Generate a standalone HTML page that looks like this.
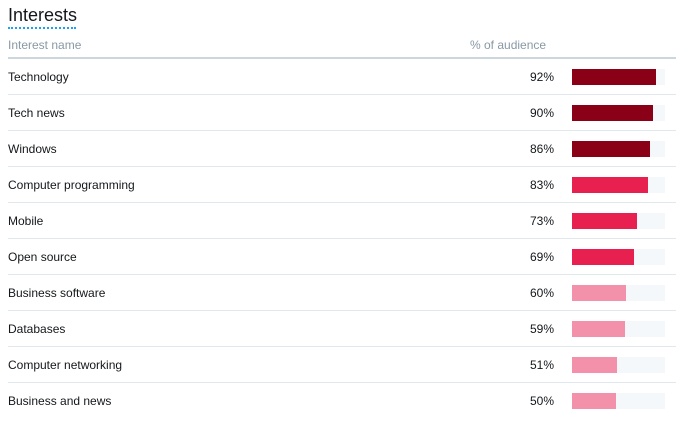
<!DOCTYPE html><html><head><style>
body{margin:0;background:#fff;font-family:"Liberation Sans",sans-serif;width:676px;height:423px;overflow:hidden;position:relative}
.t{position:absolute;left:8px;top:5px;font-size:18px;color:#14171a;padding-bottom:1px;border-bottom:2px dotted #1da1f2;line-height:21px;width:68px;white-space:nowrap}
.h{position:absolute;top:38px;font-size:12px;color:#8899a6}
.hl{position:absolute;left:8px;right:0;top:57px;height:2px;background:#ccd6dd}
.r{position:absolute;left:8px;right:0;height:36px;border-bottom:1px solid #e1e8ed;font-size:12px;color:#14171a}
.n{position:absolute;left:0;top:12px}
.p{position:absolute;right:122px;top:12px}
.tr{position:absolute;left:564px;top:11px;width:93px;height:16px;background:#f5f8fa}
.b{height:16px}
</style></head><body>
<div class="t">Interests</div>
<div class="h" style="left:8px">Interest name</div>
<div class="h" style="left:470px">% of audience</div>
<div class="hl"></div>
<div class="r" style="top:58px"><span class="n">Technology</span><span class="p">92%</span><div class="tr"><div class="b" style="width:84px;background:#8a0016"></div></div></div>
<div class="r" style="top:94px"><span class="n">Tech news</span><span class="p">90%</span><div class="tr"><div class="b" style="width:81px;background:#8a0016"></div></div></div>
<div class="r" style="top:130px"><span class="n">Windows</span><span class="p">86%</span><div class="tr"><div class="b" style="width:78px;background:#8a0016"></div></div></div>
<div class="r" style="top:166px"><span class="n">Computer programming</span><span class="p">83%</span><div class="tr"><div class="b" style="width:76px;background:#e8204f"></div></div></div>
<div class="r" style="top:202px"><span class="n">Mobile</span><span class="p">73%</span><div class="tr"><div class="b" style="width:65px;background:#e8204f"></div></div></div>
<div class="r" style="top:238px"><span class="n">Open source</span><span class="p">69%</span><div class="tr"><div class="b" style="width:62px;background:#e8204f"></div></div></div>
<div class="r" style="top:274px"><span class="n">Business software</span><span class="p">60%</span><div class="tr"><div class="b" style="width:54px;background:#f491aa"></div></div></div>
<div class="r" style="top:310px"><span class="n">Databases</span><span class="p">59%</span><div class="tr"><div class="b" style="width:53px;background:#f491aa"></div></div></div>
<div class="r" style="top:346px"><span class="n">Computer networking</span><span class="p">51%</span><div class="tr"><div class="b" style="width:45px;background:#f491aa"></div></div></div>
<div class="r" style="top:382px;border-bottom:none"><span class="n">Business and news</span><span class="p">50%</span><div class="tr"><div class="b" style="width:44px;background:#f491aa"></div></div></div>
</body></html>
